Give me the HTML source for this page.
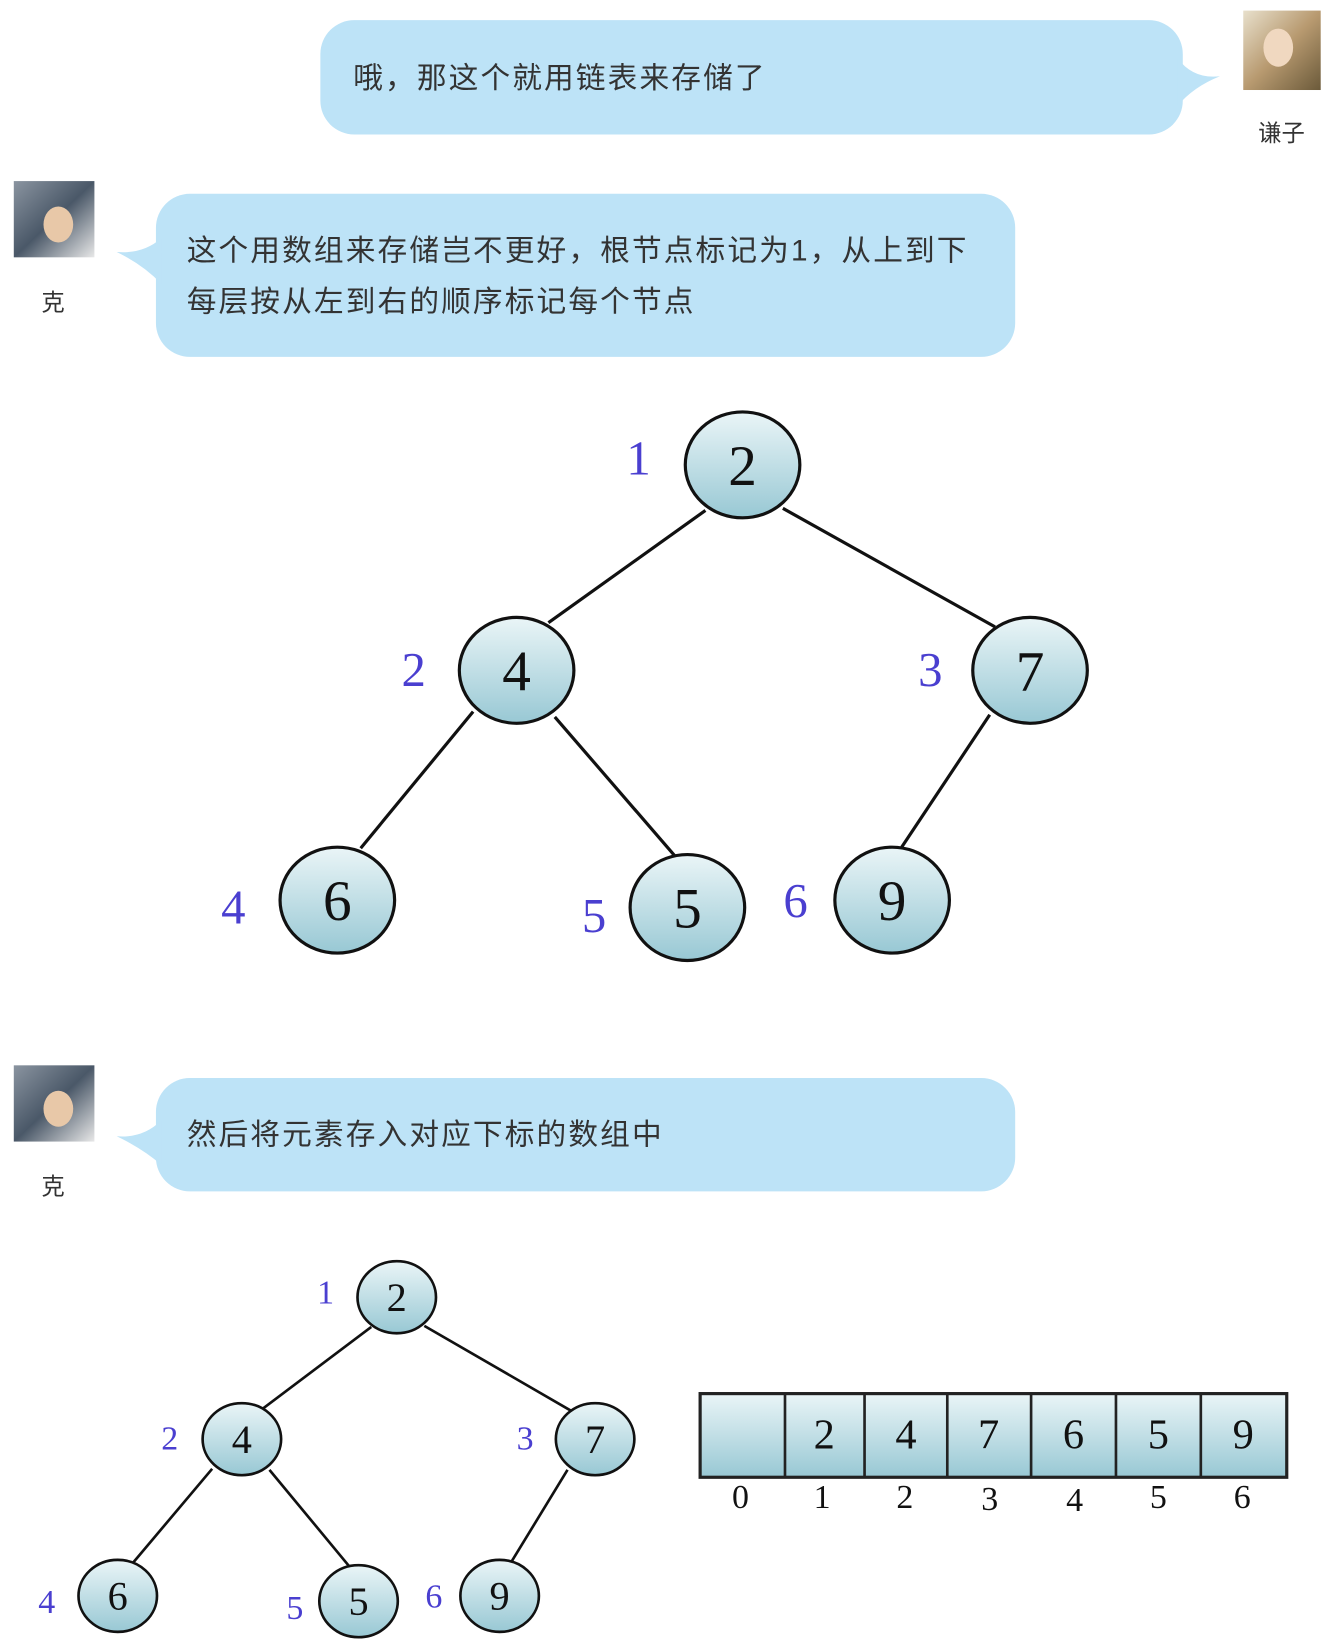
<!DOCTYPE html>
<html><head><meta charset="utf-8"><style>
html,body{margin:0;padding:0;background:#fff;}
svg{display:block;}
.cn{font-family:"Liberation Sans","Noto Sans CJK SC",sans-serif;fill:#333;}
.bt{letter-spacing:2px;}
.num{font-family:"Liberation Serif","DejaVu Serif",serif;fill:#111;text-anchor:middle;}
.lab{font-family:"Liberation Serif","DejaVu Serif",serif;fill:#4a3fd0;text-anchor:middle;}
</style></head><body>
<svg width="1326" height="1652" viewBox="0 0 1250 1560" preserveAspectRatio="none" xmlns="http://www.w3.org/2000/svg">
<defs>
<linearGradient id="g" x1="0" y1="0" x2="0" y2="1"><stop offset="0" stop-color="#eaf5f7"/><stop offset="1" stop-color="#98c8d4"/></linearGradient>
<linearGradient id="av1" x1="0" y1="0" x2="1" y2="1"><stop offset="0" stop-color="#e8e0cc"/><stop offset=".5" stop-color="#b89a70"/><stop offset="1" stop-color="#6b5a3a"/></linearGradient>
<linearGradient id="av2" x1="0" y1="0" x2="1" y2="1"><stop offset="0" stop-color="#8a94a0"/><stop offset=".5" stop-color="#4a5868"/><stop offset="1" stop-color="#e8e8e8"/></linearGradient>
</defs>
<rect x="302" y="19" width="813" height="108" rx="32" fill="#bde3f7"/>
<path d="M1110 55 Q1125 75 1150 72 Q1125 82 1110 100 Z" fill="#bde3f7"/>
<text x="333" y="83" class="cn bt" font-size="28">哦，那这个就用链表来存储了</text>
<rect x="1172" y="10" width="73" height="75" fill="url(#av1)"/>
<ellipse cx="1205" cy="45" rx="14" ry="18" fill="#f0d8c0"/>
<text x="1208" y="133" class="cn" font-size="22" text-anchor="middle">谦子</text>
<rect x="13" y="171" width="76" height="72" fill="url(#av2)"/>
<ellipse cx="55" cy="212" rx="14" ry="17" fill="#e8c8a8"/>
<text x="50" y="293" class="cn" font-size="22" text-anchor="middle">克</text>
<rect x="147" y="183" width="810" height="154" rx="32" fill="#bde3f7"/>
<path d="M152 225 Q135 240 110 238 Q135 250 152 268 Z" fill="#bde3f7"/>
<text x="176" y="246" class="cn bt" font-size="28">这个用数组来存储岂不更好，根节点标记为1，从上到下</text>
<text x="176" y="294" class="cn bt" font-size="28">每层按从左到右的顺序标记每个节点</text>
<g stroke="#111" stroke-width="3">
<line x1="665" y1="482" x2="517" y2="588"/><line x1="738" y1="480" x2="938" y2="592"/>
<line x1="446" y1="672" x2="340" y2="801"/><line x1="523" y1="677" x2="636" y2="808"/>
<line x1="933" y1="675" x2="850" y2="800"/>
<g fill="url(#g)">
<ellipse cx="700" cy="439" rx="54" ry="50"/><ellipse cx="487" cy="633" rx="54" ry="50"/>
<ellipse cx="971" cy="633" rx="54" ry="50"/><ellipse cx="318" cy="850" rx="54" ry="50"/>
<ellipse cx="648" cy="857" rx="54" ry="50"/><ellipse cx="841" cy="850" rx="54" ry="50"/>
</g></g>
<g class="num" font-size="54">
<text x="700" y="458">2</text><text x="487" y="652">4</text><text x="971" y="652">7</text>
<text x="318" y="869">6</text><text x="648" y="876">5</text><text x="841" y="869">9</text>
</g>
<g class="lab" font-size="46">
<text x="602" y="448">1</text><text x="390" y="648">2</text><text x="877" y="648">3</text>
<text x="220" y="872">4</text><text x="560" y="880">5</text><text x="750" y="866">6</text>
</g>
<rect x="13" y="1006" width="76" height="72" fill="url(#av2)"/>
<ellipse cx="55" cy="1047" rx="14" ry="17" fill="#e8c8a8"/>
<text x="50" y="1128" class="cn" font-size="22" text-anchor="middle">克</text>
<rect x="147" y="1018" width="810" height="107" rx="32" fill="#bde3f7"/>
<path d="M152 1058 Q135 1075 110 1073 Q135 1085 152 1100 Z" fill="#bde3f7"/>
<text x="176" y="1081" class="cn bt" font-size="28">然后将元素存入对应下标的数组中</text>
<g stroke="#111" stroke-width="2.5">
<line x1="350" y1="1253" x2="248" y2="1330"/><line x1="400" y1="1252" x2="538" y2="1332"/>
<line x1="200" y1="1387" x2="126" y2="1475"/><line x1="254" y1="1388" x2="330" y2="1480"/>
<line x1="535" y1="1388" x2="482" y2="1475"/>
<g fill="url(#g)">
<ellipse cx="374" cy="1225" rx="37" ry="34"/><ellipse cx="228" cy="1359" rx="37" ry="34"/>
<ellipse cx="561" cy="1359" rx="37" ry="34"/><ellipse cx="111" cy="1507" rx="37" ry="34"/>
<ellipse cx="338" cy="1512" rx="37" ry="34"/><ellipse cx="471" cy="1507" rx="37" ry="34"/>
</g></g>
<g class="num" font-size="38">
<text x="374" y="1238">2</text><text x="228" y="1372">4</text><text x="561" y="1372">7</text>
<text x="111" y="1520">6</text><text x="338" y="1525">5</text><text x="471" y="1520">9</text>
</g>
<g class="lab" font-size="32">
<text x="307" y="1231">1</text><text x="160" y="1369">2</text><text x="495" y="1369">3</text>
<text x="44" y="1523">4</text><text x="278" y="1529">5</text><text x="409" y="1518">6</text>
</g>
<rect x="660" y="1316" width="553" height="79" fill="url(#g)" stroke="#222" stroke-width="3"/>
<g stroke="#222" stroke-width="2.5">
<line x1="740" y1="1316" x2="740" y2="1395"/><line x1="815" y1="1316" x2="815" y2="1395"/>
<line x1="893" y1="1316" x2="893" y2="1395"/><line x1="972" y1="1316" x2="972" y2="1395"/>
<line x1="1052" y1="1316" x2="1052" y2="1395"/><line x1="1132" y1="1316" x2="1132" y2="1395"/>
</g>
<g class="num" font-size="40">
<text x="777" y="1368">2</text><text x="854" y="1368">4</text><text x="932" y="1368">7</text>
<text x="1012" y="1368">6</text><text x="1092" y="1368">5</text><text x="1172" y="1368">9</text>
</g>
<g class="num" font-size="32" fill="#222">
<text x="698" y="1424">0</text><text x="775" y="1424">1</text><text x="853" y="1424">2</text>
<text x="933" y="1426">3</text><text x="1013" y="1427">4</text><text x="1092" y="1424">5</text><text x="1171" y="1424">6</text>
</g>
</svg>
</body></html>
